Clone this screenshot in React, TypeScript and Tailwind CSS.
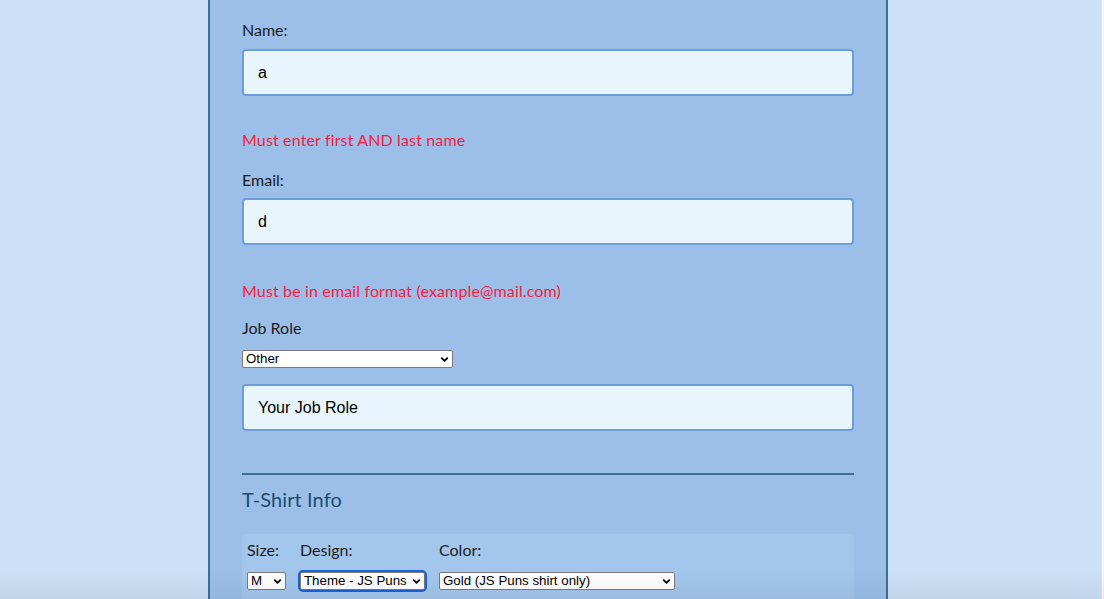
import { ChevronDown } from 'lucide-react';

const label = 'block text-[16px] leading-[20px] text-[#1c1c1c]';
const field =
  'block w-full h-[47px] rounded-[4px] border-2 border-[#6a9fd8] bg-[#e8f5fc] px-[14px] text-[16px] text-black outline-none';
const errorText = 'text-[16px] leading-[20px] tracking-[0.14px] text-[#fb1b3c]';

const Select = ({
  value,
  options,
  width,
  focused,
}: {
  value: string;
  options: string[];
  width: string;
  focused?: boolean;
}) => (
  <div
    className={`relative ${width} ${
      focused ? 'rounded-[3px] outline-2 outline-[#1a63d6] outline-offset-[0px]' : ''
    }`}
  >
    <select
      defaultValue={value}
      className="block h-[18px] w-full appearance-none rounded-[2px] border border-[#7a7a7a] bg-white pl-[3px] pr-[14px] text-[13.3px] leading-[16px] text-black outline-none"
      style={{ fontFamily: '"Liberation Sans", Arial, sans-serif' }}
    >
      {options.map((o) => (
        <option key={o}>{o}</option>
      ))}
    </select>
    <ChevronDown
      className="pointer-events-none absolute right-[3px] top-[4px] h-[11px] w-[11px] text-black"
      strokeWidth={4}
    />
  </div>
);

export default function App() {
  return (
    <div
      className="relative flex h-[599px] w-full overflow-hidden bg-[#cce0f7]"
      style={{ fontFamily: 'Lato, "Noto Sans", sans-serif' }}
    >
      <div className="flex-1">
        <div className="ml-[208px] h-full w-[680px] border-x-2 border-[#3d6f95] bg-[#9bbfe9] px-[32px] pt-[20px]">
          <label className={label}>Name:</label>
          <input
            className={`${field} mt-[9px]`}
            style={{ fontFamily: '"Liberation Sans", Arial, sans-serif' }}
            defaultValue="a"
          />
          <p className={`${errorText} mt-[34px]`}>Must enter first AND last name</p>

          <label className={`${label} mt-[20px]`}>Email:</label>
          <input
            className={`${field} mt-[8px]`}
            style={{ fontFamily: '"Liberation Sans", Arial, sans-serif' }}
            defaultValue="d"
          />
          <p className={`${errorText} mt-[36px]`}>
            Must be in email format (example@mail.com)
          </p>

          <label className={`${label} mt-[17px]`}>Job Role</label>
          <div className="mt-[12px]">
            <Select
              value="Other"
              options={['Full Stack JavaScript Developer', 'Other']}
              width="w-[211px]"
            />
          </div>
          <input
            className={`${field} mt-[16px]`}
            style={{ fontFamily: '"Liberation Sans", Arial, sans-serif' }}
            defaultValue="Your Job Role"
          />

          <hr className="mt-[42px] border-0 border-t-2 border-[#3d6f95]" />
          <h2 className="mt-[12px] text-[20px] leading-[24px] tracking-[0.1px] text-[#1b4d6d]">
            T-Shirt Info
          </h2>

          <div className="mt-[23px] h-[80px] rounded-[4px] bg-[#a3c6ec] px-[5px] pt-[6px]">
            <div className="flex gap-[14px]">
              <div className="flex flex-col">
                <span className={label}>Size:</span>
                <div className="mt-[12px]">
                  <Select value="M" options={['S', 'M', 'L', 'XL']} width="w-[39px]" />
                </div>
              </div>
              <div className="flex flex-col">
                <span className={label}>Design:</span>
                <div className="mt-[12px]">
                  <Select
                    value="Theme - JS Puns"
                    options={['Theme - JS Puns', 'Theme - I ♥ JS']}
                    width="w-[125px]"
                    focused
                  />
                </div>
              </div>
              <div className="flex flex-col">
                <span className={label}>Color:</span>
                <div className="mt-[12px]">
                  <Select
                    value="Gold (JS Puns shirt only)"
                    options={['Cornflower Blue (JS Puns shirt only)', 'Gold (JS Puns shirt only)']}
                    width="w-[236px]"
                  />
                </div>
              </div>
            </div>
          </div>
        </div>
      </div>
      <div className="w-[3px] border-l border-[#e4e4e4] bg-[#f7f7f7]" />
      <div className="pointer-events-none absolute inset-x-0 bottom-0 h-[30px] bg-gradient-to-b from-transparent to-black/[0.05]" />
    </div>
  );
}
